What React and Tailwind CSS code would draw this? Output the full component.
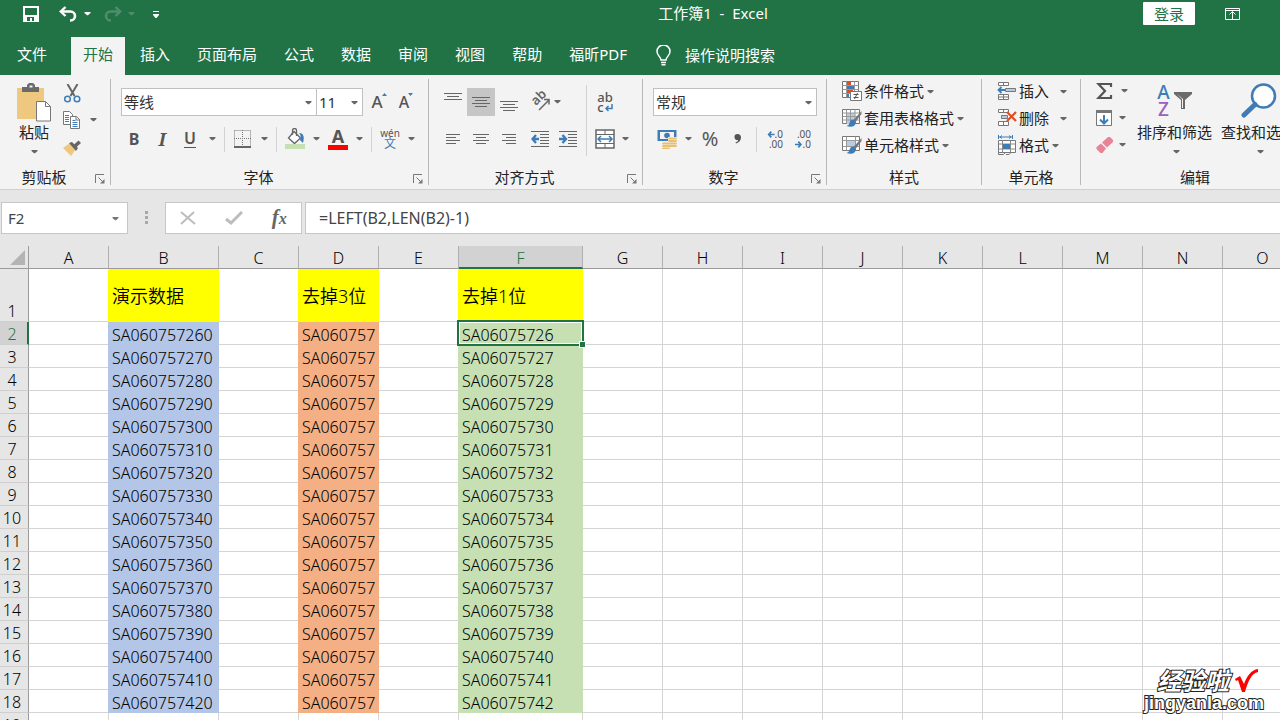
import clsx from 'clsx';

const TABS = ['文件', '开始', '插入', '页面布局', '公式', '数据', '审阅', '视图', '帮助', '福昕PDF'];

const COLUMNS = [
    { name: 'A', width: 80 },
    { name: 'B', width: 110, fill: 'bg-[#b4c6e7] shadow-[-1px_0_0_#b4c6e7]', title: '演示数据' },
    { name: 'C', width: 80 },
    { name: 'D', width: 80, fill: 'bg-[#f4b084] shadow-[-1px_0_0_#f4b084]', title: '去掉3位' },
    { name: 'E', width: 80 },
    { name: 'F', width: 124, fill: 'bg-[#c6e0b4] shadow-[-1px_0_0_#c6e0b4]', title: '去掉1位' },
    ...['G', 'H', 'I', 'J', 'K', 'L', 'M', 'N', 'O'].map((name) => ({ name, width: 80 })),
];

const ROWS = Array.from({ length: 17 }, (_, i) => {
    const code = `SA060757${260 + i * 10}`;
    return { number: i + 2, B: code, D: code.slice(0, -3), F: code.slice(0, -1) };
});

const Arrow = ({ className }) => (
    <svg width="7" height="4" viewBox="0 0 7 4" className={clsx('shrink-0', className)} fill="currentColor">
        <path d="M.5 0h6v1l-2.500 2.200h-1L.5 1z" />
    </svg>
);

const IconButton = ({ label, className, children }) => (
    <button aria-label={label} className={clsx('flex h-7 w-7 shrink-0 items-center justify-center text-[#555]', className)}>
        {children}
    </button>
);

const DropButton = ({ label, className }) => (
    <button aria-label={label} className={clsx('flex h-7 w-4 shrink-0 items-center justify-center text-[#666]', className)}>
        <Arrow />
    </button>
);

const Divider = ({ className }) => <div className={clsx('h-[25px] w-px shrink-0 bg-[#d2d2d2]', className)} />;

const Combo = ({ label, value, className }) => (
    <div className={clsx('relative h-7 shrink-0 border border-[#c0c0c0] bg-white', className)}>
        <select aria-label={label} className="h-full w-full appearance-none bg-transparent px-[2px] text-[15px] text-[#333] outline-none">
            <option>{value}</option>
        </select>
        <Arrow className="pointer-events-none absolute top-3 right-1 text-[#666]" />
    </div>
);

const Group = ({ title, launcher, last, className, children }) => (
    <section className={clsx('flex h-[106px] shrink-0 flex-col', !last && 'border-r border-[#b8b8b8]', className)}>
        <div className="flex-1">{children}</div>
        <div className="flex h-4 items-center">
            <h2 className="flex-1 text-center">{title}</h2>
            {launcher && (
                <button aria-label={`${title}设置`} className="flex w-[22px] justify-center pt-1 pl-[2px]">
                    <svg width="10" height="10" viewBox="0 0 10 10" fill="none" stroke="#777">
                        <path d="M.5 9V.5H9" />
                        <path d="m3.500 3.500 4 4" />
                        <path d="M5 9.500h4.500V5z" fill="#777" stroke="none" />
                    </svg>
                </button>
            )}
        </div>
    </section>
);

/* Horizontal strokes used by all the alignment buttons: [x1, x2, y] */
const Lines = ({ rows }) => (
    <svg width="20" height="20" viewBox="0 0 20 20" stroke="#666">
        {rows.map(([x1, x2, y]) => <path key={y} d={`M${x1} ${y}.5H${x2}`} />)}
    </svg>
);

const TitleBar = () => (
    <div className="flex h-[37px] items-start text-[15px] leading-5 text-white">
        <div className="flex h-7 w-[283px] items-center pl-[23px]">
            <button aria-label="保存">
                <svg width="16" height="16" viewBox="0 0 16 16" fill="none" stroke="#fff">
                    <path d="M1 1h14v14H1z" strokeWidth="2" />
                    <path d="M1 9h14v6H1z" fill="#fff" stroke="none" />
                    <path d="M4 11h7v4h-2v-3H7v3H4z" fill="#217346" stroke="none" />
                </svg>
            </button>
            <button aria-label="撤消" className="ml-5">
                <svg width="18" height="16" viewBox="0 0 18 16" fill="none" stroke="#fff">
                    <path d="M2 5.500h9.500a4.500 4.500 0 0 1 0 9H11" strokeWidth="2.600" />
                    <path d="M6.500 1 1.800 5.500 6.500 10" strokeWidth="2.400" />
                </svg>
            </button>
            <Arrow className="ml-[7px]" />
            <button aria-label="恢复" className="ml-[13px] opacity-20">
                <svg width="18" height="16" viewBox="0 0 18 16" fill="none" stroke="#fff">
                    <path d="M16 5.500H6.500a4.500 4.500 0 0 0 0 9H7" strokeWidth="2.600" />
                    <path d="m11.500 1 4.700 4.500-4.700 4.500" strokeWidth="2.400" />
                </svg>
            </button>
            <Arrow className="ml-[6px] opacity-20" />
            <button aria-label="自定义快速访问工具栏" className="ml-[18px]">
                <svg width="6" height="7" viewBox="0 0 6 7" fill="#fff">
                    <path d="M0 0h6v1H0zM0 3h6v1L3.500 7h-1L0 4z" />
                </svg>
            </button>
        </div>
        <h1 className="flex-1 pt-[3px] text-center font-normal whitespace-pre">工作簿1  -  Excel</h1>
        <div className="flex w-[137px] pt-[2px]">
            <button className="h-[23px] w-[52px] rounded-[1px] bg-white text-[#217346]">登录</button>
            <button aria-label="功能区显示选项" className="ml-[30px] h-[23px]">
                <svg width="15" height="12" viewBox="0 0 15 12" fill="none" stroke="#fff">
                    <path d="M.5.5h14v11H.5zM0 2.500h15M7.500 4v7M4.500 6.500l3-3 3 3" />
                </svg>
            </button>
        </div>
    </div>
);

const TabStrip = () => (
    <nav className="flex h-[38px] gap-[3px] pl-[5px] text-[15px] leading-5 text-white">
        {TABS.map((tab, i) => (
            <button
                key={tab}
                className={clsx('shrink-0 px-3 pb-[5px]', i === 0 && 'mr-[9px]', i === 1 && 'bg-[#f3f3f3] text-[#217346]')}
            >
                {tab}
            </button>
        ))}
        <button className="ml-[14px] flex shrink-0 items-center gap-[14px] pb-[2px]">
            <svg width="15" height="21" viewBox="0 0 15 21" fill="none" stroke="#fff" strokeWidth="1.500">
                <path d="M5 15c0-3-4-4.500-4-8.500a6.500 6.500 0 0 1 13 0c0 4-4 5.500-4 8.500z" />
                <path d="M5 17.500h5M5.500 19.800h4" />
            </svg>
            操作说明搜索
        </button>
    </nav>
);

const Clipboard = () => (
    <Group title="剪贴板" launcher className="w-[111px]">
        <div className="flex">
            <button className="ml-[14px] flex w-10 flex-col items-center pt-1">
                <svg width="36" height="40" viewBox="0 0 36 40" fill="none">
                    <path d="M1 5h27v31H1z" fill="#edc87e" />
                    <path d="M6 9V4h5V2l2-2h4l2 2v2h4v5z" fill="#6a6a6a" />
                    <path d="M13.500 2.500h3v2h-3z" fill="#f3f3f3" />
                    <path d="M20.500 18.500h9l5 5v14.500h-14z" fill="#fff" stroke="#777" />
                    <path d="M29.500 18.500v5h5" stroke="#777" />
                </svg>
                <span className="mt-[-1px] leading-5">粘贴</span>
                <Arrow className="mt-[8px] text-[#666]" />
            </button>
            <div className="ml-1 flex flex-col">
                <IconButton label="剪切">
                    <svg width="17" height="19" viewBox="0 0 17 19" fill="none">
                        <path d="m3.500 0 7 12M13.500 0l-7 12" stroke="#666" strokeWidth="2" />
                        <circle cx="3.500" cy="15" r="2.800" stroke="#3e7cb8" strokeWidth="1.500" />
                        <circle cx="13" cy="15" r="2.800" stroke="#3e7cb8" strokeWidth="1.500" />
                    </svg>
                </IconButton>
                <div className="-mt-px flex">
                    <IconButton label="复制">
                        <svg width="18" height="19" viewBox="0 0 18 19" fill="#fff" stroke="#777">
                            <path d="M.5.500h6l3 3v10h-9z" />
                            <path d="M7.500 5.500h6l3 3v9h-9z" />
                            <path d="M13 5.500v3.500h4" fill="none" />
                            <path d="M2 4.500h4M2 6.500h4M2 8.500h4M2 10.500h4M9.500 9.500h3M9.500 11.500h5M9.500 13.500h5M9.500 15.500h5" stroke="#3e7cb8" />
                        </svg>
                    </IconButton>
                    <DropButton label="复制选项" className="-ml-px" />
                </div>
                <IconButton label="格式刷">
                    <svg width="18" height="16" viewBox="0 0 18 16">
                        <path d="m0 8 7-5 6 6-5 7z" fill="#edc87e" />
                        <path d="m6 3 3-1 6 6-2 3z" fill="#666" />
                        <path d="m10.500 5 5-4.500L18 3l-5 4.500z" fill="#666" />
                    </svg>
                </IconButton>
            </div>
        </div>
    </Group>
);

const FontGroup = () => (
    <Group title="字体" launcher className="w-[318px]">
        <div className="flex items-center pt-[9px] pl-[10px]">
            <Combo label="字体" value="等线" className="w-[196px]" />
            <Combo label="字号" value="11" className="-ml-px w-[47px]" />
            <IconButton label="增大字号" className="ml-[2px]">
                <span className="text-[17px] leading-6 font-medium">A</span>
                <svg width="5" height="3" viewBox="0 0 5 3" className="-ml-px mb-4">
                    <path d="m0 3 2.500-3L5 3z" fill="#3e7cb8" />
                </svg>
            </IconButton>
            <IconButton label="减小字号" className="-ml-px">
                <span className="text-[16px] leading-6 font-medium">A</span>
                <svg width="5" height="3" viewBox="0 0 5 3" className="-ml-px mb-4">
                    <path d="m0 0 2.500 3L5 0z" fill="#3e7cb8" />
                </svg>
            </IconButton>
        </div>
        <div className="mt-[9px] flex items-center pl-[9px]">
            <IconButton label="加粗"><b className="text-[16px]">B</b></IconButton>
            <IconButton label="倾斜"><i className="font-['Noto_Serif','Liberation_Serif',serif] text-[18px] font-bold">I</i></IconButton>
            <IconButton label="下划线">
                <span className="border-b border-[#555] text-[16px] leading-[17px] font-semibold">U</span>
            </IconButton>
            <DropButton label="下划线选项" />
            <Divider className="ml-1" />
            <IconButton label="边框" className="ml-1">
                <svg width="18" height="18" viewBox="0 0 18 18" fill="none" stroke="#777">
                    <path d="M.5.500h16v16M.5.500v16M8.500 0v16M0 8.500h17" strokeDasharray="1 1" />
                    <path d="M0 17h17" strokeWidth="2" stroke="#666" />
                </svg>
            </IconButton>
            <DropButton label="边框选项" className="-ml-px" />
            <Divider className="ml-1" />
            <IconButton label="填充颜色" className="ml-1">
                <svg width="20" height="22" viewBox="0 0 20 22" fill="none">
                    <path d="m9 3.500 6.500 6.500-6 5.500L3.500 10z" fill="#fff" stroke="#666" strokeWidth="1.300" />
                    <path d="M7.500 7V2.500a1.500 1.500 0 0 1 4 0V8" stroke="#666" strokeWidth="1.300" />
                    <path d="M14 5c4 0 6 3 4 10l-3-3c1-3 1-5-1-7z" fill="#3e7cb8" />
                    <path d="M0 16h20v5H0z" fill="#c6e0b4" />
                </svg>
            </IconButton>
            <DropButton label="填充颜色选项" className="-ml-px" />
            <IconButton label="字体颜色" className="flex-col">
                <b className="text-[18px] leading-[17px]">A</b>
                <i className="h-[5px] w-5 bg-[#f00]" />
            </IconButton>
            <DropButton label="字体颜色选项" className="-ml-px" />
            <Divider className="ml-1" />
            <IconButton label="拼音" className="ml-1 flex-col">
                <span className="text-[10px] leading-[9px]">wén</span>
                <span className="text-[12px] leading-[12px] text-[#3e7cb8]">文</span>
            </IconButton>
            <DropButton label="拼音选项" className="-ml-px" />
        </div>
    </Group>
);

const AlignGroup = () => (
    <Group title="对齐方式" launcher className="w-[214px]">
        <div className="flex pl-[10px]">
            <div className="w-[147px]">
                <div className="flex pt-[9px]">
                    <IconButton label="顶端对齐"><Lines rows={[[1, 19, 1], [4, 16, 4], [1, 19, 7]]} /></IconButton>
                    <IconButton label="垂直居中" className="bg-[#c6c6c6]"><Lines rows={[[1, 19, 5], [4, 16, 8], [1, 19, 11], [4, 16, 14]]} /></IconButton>
                    <IconButton label="底端对齐"><Lines rows={[[1, 19, 9], [4, 16, 12], [1, 19, 15], [4, 16, 18]]} /></IconButton>
                    <IconButton label="方向" className="ml-[3px]">
                        <svg width="22" height="22" viewBox="0 0 22 22" fill="none" stroke="#666" className="overflow-visible">
                            <text x="0" y="0" transform="translate(7 15) rotate(-45)" fontSize="13" fontWeight="600" fill="#666" stroke="none">ab</text>
                            <path d="m10 19 10-10M15 8.500h5v5" strokeWidth="1.500" />
                        </svg>
                    </IconButton>
                    <DropButton label="方向选项" className="-ml-[5px]" />
                </div>
                <div className="mt-[9px] flex">
                    <IconButton label="左对齐"><Lines rows={[[3, 17, 5], [3, 13, 8], [3, 17, 11], [3, 13, 14]]} /></IconButton>
                    <IconButton label="居中"><Lines rows={[[2, 18, 5], [5, 15, 8], [2, 18, 11], [5, 15, 14]]} /></IconButton>
                    <IconButton label="右对齐"><Lines rows={[[3, 17, 5], [7, 17, 8], [3, 17, 11], [7, 17, 14]]} /></IconButton>
                    <IconButton label="减少缩进量" className="ml-[3px]">
                        <svg width="18" height="17" viewBox="0 0 18 17" fill="none" stroke="#666">
                            <path d="M0 .5h18M9 3.500h9M9 6.500h9M9 9.500h9M9 12.500h9M0 15.500h18" />
                            <path d="M8 8H1.500M5 4 1.500 8 5 12" stroke="#3e7cb8" strokeWidth="2.400" />
                        </svg>
                    </IconButton>
                    <IconButton label="增加缩进量">
                        <svg width="18" height="17" viewBox="0 0 18 17" fill="none" stroke="#666">
                            <path d="M0 .5h18M9 3.500h9M9 6.500h9M9 9.500h9M9 12.500h9M0 15.500h18" />
                            <path d="M0 8h6.500M3.500 4 7 8l-3.500 4" stroke="#3e7cb8" strokeWidth="2.400" />
                        </svg>
                    </IconButton>
                </div>
            </div>
            <div className="mt-[6px] h-[71px] w-px bg-[#d2d2d2]" />
            <div className="pt-[9px] pl-1">
                <IconButton label="自动换行" className="flex-col text-[13px] leading-[10px] font-medium">
                    <span>ab</span>
                    <span className="flex items-end">
                        c
                        <svg width="9" height="8" viewBox="0 0 9 8" fill="none">
                            <path d="M8 0v4.500H2M4.500 2 2 4.500 4.500 7" stroke="#3e7cb8" strokeWidth="1.500" />
                        </svg>
                    </span>
                </IconButton>
                <div className="mt-[9px] flex">
                    <IconButton label="合并后居中">
                        <svg width="20" height="20" viewBox="0 0 20 20" fill="none" stroke="#666">
                            <path d="M1 1h18v18H1z" fill="#fff" strokeWidth="1.500" />
                            <path d="M1 5.500h18M1 14.500h18M10 1v4M10 15v4" />
                            <path d="M3 10h14M6 7l-3 3 3 3M14 7l3 3-3 3" stroke="#3e7cb8" strokeWidth="1.500" />
                        </svg>
                    </IconButton>
                    <DropButton label="合并选项" className="-ml-[2px]" />
                </div>
            </div>
        </div>
    </Group>
);

const NumberGroup = () => (
    <Group title="数字" launcher className="w-[184px]">
        <div className="px-[10px] pt-[9px]">
            <Combo label="数字格式" value="常规" className="w-[164px]" />
        </div>
        <div className="mt-[9px] flex items-center pl-[10px]">
            <IconButton label="会计数字格式">
                <svg width="20" height="20" viewBox="0 0 20 20" fill="none">
                    <path d="M.5 1h19v11H.5z" fill="#3e7cb8" />
                    <path d="M3 3h14v7H3z" fill="#f3f3f3" />
                    <path d="M1 1h4L1 5zM19 1h-4l4 4zM1 12h4L1 8z" fill="#3e7cb8" />
                    <circle cx="10" cy="6.500" r="2.800" fill="#3e7cb8" />
                    <path d="M11 8h9v11h-9z" fill="#f3f3f3" />
                    <path d="M12 9.500h7M12 12h7M12 14.500h7M12 17h7M6 14.500h6M6 17h6M6 19.300h6" stroke="#e9bf70" strokeWidth="1.800" strokeLinecap="round" />
                </svg>
            </IconButton>
            <DropButton label="会计格式选项" className="-ml-px" />
            <IconButton label="百分比样式" className="text-[20px]">%</IconButton>
            <IconButton label="千位分隔样式">
                <svg width="8" height="10" viewBox="0 0 8 10" fill="#555">
                    <path d="M3.500 0C5.800 0 7 1.500 7 3.500c0 3-2 5-5 6l-.500-1C3.200 8 4 7 4 6 2 6.500.5 5 .5 3.200A3 3 0 0 1 3.500 0" />
                </svg>
            </IconButton>
            <Divider className="ml-1" />
            <IconButton label="增加小数位数" className="ml-1 flex-col text-[10px] leading-[10px]">
                <span className="flex w-4 items-center justify-between">
                    <svg width="8" height="7" viewBox="0 0 8 7" fill="none">
                        <path d="M8 3.500H2M4.500.5 1.800 3.500l2.700 3" stroke="#3e7cb8" strokeWidth="1.800" />
                    </svg>
                    .0
                </span>
                <span className="w-4 text-right">.00</span>
            </IconButton>
            <IconButton label="减少小数位数" className="flex-col text-[10px] leading-[10px]">
                <span className="w-4 text-right">.00</span>
                <span className="flex w-4 items-center justify-between">
                    <svg width="8" height="7" viewBox="0 0 8 7" fill="none">
                        <path d="M0 3.500h6M3.500.5l2.700 3-2.700 3" stroke="#3e7cb8" strokeWidth="1.800" />
                    </svg>
                    .0
                </span>
            </IconButton>
        </div>
    </Group>
);

const TableIcon = ({ children }) => (
    <svg width="20" height="20" viewBox="0 0 20 20" fill="none">
        <path d="M.5 1.500h17v14H.5z" fill="#fff" stroke="#777" />
        {children}
        <path d="m19.500 3-8 9 2 2 6-8z" fill="#777" />
        <path d="M12 12c-3-1-4 1-4.500 3-.3 1.500-1.500 2.500-3 3 4 1.500 9 1 9.500-4z" fill="#3e7cb8" />
    </svg>
);

const MenuRow = ({ icon, text, wide }) => (
    <button className="flex h-[27px] items-center pb-[3px]">
        {icon}
        <span className="ml-[2px]">{text}</span>
        <Arrow className={clsx('mt-[2px] text-[#666]', wide ? 'ml-[11px]' : 'ml-[3px]')} />
    </button>
);

const StyleGroup = () => (
    <Group title="样式" className="w-[155px]">
        <div className="flex flex-col pl-[15px]">
            <MenuRow
                text="条件格式"
                icon={
                    <svg width="20" height="20" viewBox="0 0 20 20" fill="none">
                        <path d="M.5.500h16v16H.5z" fill="#fff" stroke="#777" />
                        <path d="M4.500.500v16M12.500.500v16M.5 4.500h16M.5 8.500h16M.5 12.500h16" stroke="#999" />
                        <path d="M5 1h4v3H5zM5 9h6v3H5z" fill="#dc5027" />
                        <path d="M5 5h7v3H5zM5 13h2v3H5z" fill="#3e7cb8" />
                        <path d="M8.500 10.500h11v9h-11z" fill="#fff" stroke="#777" />
                        <path d="M11.500 13.500h5M11.500 16.500h5M15.500 12l-3 6" stroke="#555" />
                    </svg>
                }
            />
            <MenuRow
                text="套用表格格式"
                icon={
                    <TableIcon>
                        <path d="M5 5h8v11H5z" fill="#b8cde4" />
                        <path d="M4.500 1.500v14M8.500 1.500v14M13 1.500v14M.5 5h17M.5 8.500h17M.5 12h17" stroke="#999" />
                    </TableIcon>
                }
            />
            <MenuRow
                text="单元格样式"
                icon={
                    <TableIcon>
                        <path d="M4.500 1.500v14M13.500 1.500v14M.5 5.500h17M.5 11.500h17" stroke="#999" />
                        <path d="M5 6h8v5H5z" fill="#b8cde4" />
                    </TableIcon>
                }
            />
        </div>
    </Group>
);

const CellGroup = () => (
    <Group title="单元格" className="w-[99px]">
        <div className="flex flex-col pl-[15px]">
            <MenuRow
                wide
                text="插入"
                icon={
                    <svg width="20" height="20" viewBox="0 0 20 20" fill="#fff" stroke="#777">
                        <path d="M1.500 1.500h10v3h-10zM6.500 1.500v3M1.500 13.500h10v5h-10zM1.500 16h10M6.500 13.500v5" />
                        <path d="M8.500 7.500h10v3h-10z" fill="#b8cde4" />
                        <path d="M8 9H2M4.500 6 1.500 9l3 3" fill="none" stroke="#3e7cb8" strokeWidth="1.800" />
                    </svg>
                }
            />
            <MenuRow
                wide
                text="删除"
                icon={
                    <svg width="20" height="20" viewBox="0 0 20 20" fill="#fff" stroke="#777">
                        <path d="M1.500 1.500h10v3h-10zM6.500 1.500v3M1.500 13.500h10v4h-10zM6.500 13.500v4" />
                        <path d="M4.500 7.500h6v3h-6z" fill="#b8cde4" />
                        <path d="m10 4 9 9M19 4l-9 9" fill="none" stroke="#dc5027" strokeWidth="2.200" />
                    </svg>
                }
            />
            <MenuRow
                text="格式"
                icon={
                    <svg width="20" height="20" viewBox="0 0 20 20" fill="none">
                        <path d="M1.500 0v4M15.500 0v4M2 2h13M5 .500 3 2l2 1.500M12 .500 14 2l-2 1.500" stroke="#3e7cb8" />
                        <path d="M1.500 5.500h17v12h-17z" fill="#fff" stroke="#777" />
                        <path d="M5.500 5.500v12M13.500 5.500v12M1.500 9h17M1.500 14h17" stroke="#888" />
                        <path d="M6 9h7v5H6z" fill="#3e7cb8" />
                        <path d="M1.500 17.500v2h5l2-2M9 19.500h3l2-2" stroke="#777" />
                    </svg>
                }
            />
        </div>
    </Group>
);

const EditGroup = () => (
    <Group title="编辑" last className="w-[228px]">
        <div className="flex">
            <div className="ml-[14px] flex w-[42px] flex-col">
                <button aria-label="自动求和" className="flex h-[27px] items-center pb-[3px] text-[#666]">
                    <svg width="18" height="18" viewBox="0 0 18 18" fill="none" stroke="#555" strokeWidth="2.200">
                        <path d="M16 5V2H3.500L10 9l-6.500 7H16v-3" />
                    </svg>
                    <Arrow className="ml-2" />
                </button>
                <button aria-label="填充" className="flex h-[27px] items-center pb-[3px] text-[#666]">
                    <svg width="18" height="18" viewBox="0 0 18 18" fill="none">
                        <path d="M1.500 1.500h15v15h-15z" fill="#fff" stroke="#777" />
                        <path d="M1 1h16v3H1z" fill="#777" />
                        <path d="M9 6v8M5 10.500l4 4 4-4" stroke="#3e7cb8" strokeWidth="2" />
                    </svg>
                    <Arrow className="ml-[6px]" />
                </button>
                <button aria-label="清除" className="flex h-[27px] items-center pb-[3px] text-[#666]">
                    <svg width="18" height="18" viewBox="0 0 18 18">
                        <path d="M7 6.500 13 1h2l3 3v2l-6 5.500z" fill="#e88396" />
                        <path d="m6 7.500 5 5L7.500 17h-2L1.500 13v-2z" fill="#e88396" />
                    </svg>
                    <Arrow className="ml-[6px]" />
                </button>
            </div>
            <button className="flex w-[75px] flex-col items-center pt-1">
                <div className="flex h-9 items-center font-medium">
                    <span className="flex flex-col text-[19px] leading-[17px]">
                        <span className="text-[#3e7cb8]">A</span>
                        <span className="text-[#9a5fbf]">Z</span>
                    </span>
                    <svg width="18" height="18" viewBox="0 0 18 18" className="ml-1">
                        <path d="M0 0h18v2l-7 6v9H7V8L0 2z" fill="#6a6a6a" />
                        <path d="m3 2 5 5v9h1V7z" fill="#f3f3f3" />
                    </svg>
                </div>
                <span className="mt-[3px] leading-5">排序和筛选</span>
                <Arrow className="mt-[8px] ml-1 text-[#666]" />
            </button>
            <button className="ml-[9px] flex w-[75px] shrink-0 flex-col items-center pt-1">
                <svg width="36" height="36" viewBox="0 0 36 36" fill="none" stroke="#3e7cb8">
                    <circle cx="22.500" cy="13" r="11.500" fill="#fff" strokeWidth="2.500" />
                    <path d="M14 21.500 3 32" strokeWidth="5" strokeLinecap="round" />
                </svg>
                <span className="mt-[3px] leading-5 whitespace-nowrap">查找和选择</span>
                <Arrow className="mt-[8px] ml-1 text-[#666]" />
            </button>
        </div>
    </Group>
);

const FormulaBar = () => (
    <div className="flex h-14 items-start pt-3 pl-px text-[16px] text-[#444]">
        <div className="relative h-8 w-[127px] shrink-0 border border-[#c6c6c6] bg-white">
            <input aria-label="名称框" defaultValue="F2" className="h-full w-full bg-transparent px-[6px] text-[15px] outline-none" />
            <Arrow className="absolute top-[14px] right-2 text-[#777]" />
        </div>
        <div className="mt-[9px] ml-[17px] flex shrink-0 flex-col gap-[2px]">
            <i className="h-[3px] w-[3px] bg-[#a8a8a8]" />
            <i className="h-[3px] w-[3px] bg-[#a8a8a8]" />
            <i className="h-[3px] w-[3px] bg-[#a8a8a8]" />
        </div>
        <div className="ml-[17px] flex h-8 w-[137px] shrink-0 items-center justify-around border border-[#c6c6c6] bg-white">
            <button aria-label="取消">
                <svg width="16" height="14" viewBox="0 0 16 14" stroke="#bdbdbd" strokeWidth="2">
                    <path d="M1 1l14 12M14 1 1 13" />
                </svg>
            </button>
            <button aria-label="输入">
                <svg width="18" height="14" viewBox="0 0 18 14" fill="none" stroke="#bdbdbd" strokeWidth="3">
                    <path d="m1 8 5 4L17 1" />
                </svg>
            </button>
            <button aria-label="插入函数" className="font-['Liberation_Serif',serif] text-[21px] leading-6 font-bold text-[#666] italic">
                f<span className="text-[16px]">x</span>
            </button>
        </div>
        <input
            aria-label="编辑栏"
            defaultValue="=LEFT(B2,LEN(B2)-1)"
            className="ml-[3px] h-8 min-w-0 flex-1 border border-r-0 border-[#c6c6c6] bg-white px-[13px] outline-none"
        />
    </div>
);

const RowHead = ({ number, active }) => (
    <th
        scope="row"
        className={clsx(
            'border-r border-b border-b-[#cfcfcf] p-0 align-bottom leading-[20px] font-[350]',
            active ? 'border-r-2 border-r-[#217346] bg-[#d2d2d2] pr-[3px] text-[#217346]' : 'border-r-[#9b9b9b] bg-[#e6e6e6] pr-1'
        )}
    >
        {number}
    </th>
);

const Sheet = () => (
    <table className="w-[1303px] table-fixed border-separate border-spacing-0 bg-white text-[16px] leading-[20px] font-[350] text-black">
        <colgroup>
            <col className="w-[29px]" />
            {COLUMNS.map((col) => <col key={col.name} style={{ width: col.width }} />)}
        </colgroup>
        <thead>
            <tr className="h-[23px] bg-[#e6e6e6]">
                <td className="border-r border-b border-[#9b9b9b] p-0">
                    <svg width="28" height="22" viewBox="0 0 28 22" className="block">
                        <path d="M25 4v15H10z" fill="#b4b4b4" />
                    </svg>
                </td>
                {COLUMNS.map((col) => (
                    <th
                        key={col.name}
                        scope="col"
                        className={clsx(
                            'border-r border-r-[#b0b0b0] p-0 align-bottom font-[350]',
                            col.name === 'F' ? 'border-b-2 border-b-[#217346] bg-[#d2d2d2] leading-[18px] text-[#217346]' : 'border-b border-b-[#9b9b9b]'
                        )}
                    >
                        {col.name}
                    </th>
                ))}
            </tr>
        </thead>
        <tbody>
            <tr className="h-[53px] text-[18px]">
                <RowHead number={<span className="text-[16px]">1</span>} />
                {COLUMNS.map((col) => (
                    <td
                        key={col.name}
                        className={clsx(
                            'border-r border-b border-[#d4d4d4] p-0',
                            col.title && 'border-[#ff0] bg-[#ff0] pt-[2px] pl-[3px] shadow-[-1px_0_0_#ff0]'
                        )}
                    >
                        {col.title}
                    </td>
                ))}
            </tr>
            {ROWS.map((row) => (
                <tr key={row.number} className="h-[23px]">
                    <RowHead number={row.number} active={row.number === 2} />
                    {COLUMNS.map((col) => (
                        <td
                            key={col.name}
                            className={clsx(
                                'relative p-0 whitespace-nowrap',
                                col.fill ? ['pt-[3px] pl-[3px]', col.fill] : 'border-r border-b border-[#d4d4d4]'
                            )}
                        >
                            {row[col.name]}
                            {col.name === 'F' && row.number === 2 && (
                                <div className="absolute -top-[2px] -right-px -bottom-px -left-[2px] z-10 border-2 border-[#217346] ring-1 ring-white ring-inset">
                                    <div className="absolute -right-1 -bottom-1 h-[7px] w-[7px] border border-white bg-[#217346]" />
                                </div>
                            )}
                        </td>
                    ))}
                </tr>
            ))}
            <tr className="h-[23px]">
                <RowHead number={19} />
                {COLUMNS.map((col) => <td key={col.name} className="border-r border-b border-[#d4d4d4] p-0" />)}
            </tr>
        </tbody>
    </table>
);

const Watermark = () => (
    <div className="absolute right-4 bottom-[7px] z-20 flex flex-col items-end font-bold text-white [-webkit-text-stroke:2px_#222] [paint-order:stroke_fill]">
        <div className="flex items-center gap-[6px] pr-[6px]">
            <span className="text-[24px] leading-6 italic">经验啦</span>
            <svg width="23" height="24" viewBox="0 0 23 24" fill="#f00">
                <path d="m0 10 5-3 4 8C12 7 16 1 23 0v3C17 4 13 12 10 23H7L3 11l-2 1z" />
            </svg>
        </div>
        <span className="font-['Liberation_Sans',sans-serif] text-[18px] leading-5">jingyanla.com</span>
    </div>
);

export default function App() {
    return (
        <div
            lang="zh-CN"
            className="relative flex h-screen flex-col overflow-hidden bg-[#e6e6e6] font-['Noto_Sans','Noto_Sans_CJK_SC',sans-serif]"
        >
            <header className="shrink-0 bg-[#217346]">
                <TitleBar />
                <TabStrip />
            </header>
            <div className="flex h-[115px] shrink-0 overflow-hidden border-b border-[#d0d0d0] bg-[#f3f3f3] pt-1 text-[15px] leading-5 text-[#222]">
                <Clipboard />
                <FontGroup />
                <AlignGroup />
                <NumberGroup />
                <StyleGroup />
                <CellGroup />
                <EditGroup />
            </div>
            <FormulaBar />
            <main className="min-h-0 flex-1 overflow-hidden">
                <Sheet />
            </main>
            <Watermark />
        </div>
    );
}
